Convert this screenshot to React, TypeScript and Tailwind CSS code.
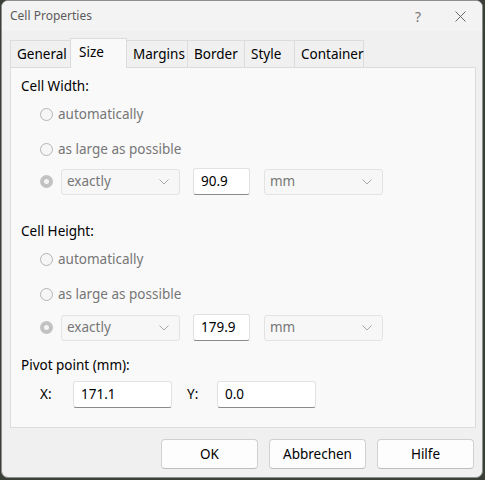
import React from "react";

const FONT = "font-['Noto_Sans','Open_Sans',sans-serif]";

function Radio() {
  return <span className="h-[13px] w-[13px] shrink-0 rounded-full border border-[#b4b4b4] bg-[#f6f6f6]" />;
}

function CheckedRadio() {
  return (
    <span className="flex h-[13px] w-[13px] shrink-0 items-center justify-center rounded-full bg-[#c2c2c2]">
      <span className="h-[5px] w-[5px] rounded-full bg-[#f4f4f4]" />
    </span>
  );
}

function Chevron() {
  return (
    <svg width="10" height="6" viewBox="0 0 10 6" className="shrink-0">
      <path d="M0.5 0.5 L5 5 L9.5 0.5" fill="none" stroke="#a8a8a8" strokeWidth="1" />
    </svg>
  );
}

function Combo({ value }: { value: string }) {
  return (
    <div className="flex h-[26px] w-[119px] items-center justify-between rounded-[3px] border border-[#e3e3e3] bg-[#f7f7f7] pl-[5px] pr-[10px] text-[#767676]">
      <span>{value}</span>
      <Chevron />
    </div>
  );
}

function Field({ value, width }: { value: string; width: string }) {
  return (
    <div className={`flex h-[27px] items-center rounded-[3px] border border-[#e2e2e2] border-b-[#8a8a8a] bg-white pl-[7px] text-black ${width}`}>
      {value}
    </div>
  );
}

function RadioOption({ label, className }: { label: string; className: string }) {
  return (
    <div className={`flex h-[20px] items-center gap-[5px] pl-[29px] text-[#767676] ${className}`}>
      <Radio />
      <span>{label}</span>
    </div>
  );
}

function SizeBlock({ title, value, first }: { title: string; value: string; first?: boolean }) {
  return (
    <>
      <div className={`flex h-[20px] items-center pl-[10px] text-black ${first ? "mt-[8px]" : "mt-[26px]"}`}>{title}</div>
      <RadioOption label="automatically" className="mt-[8px]" />
      <RadioOption label="as large as possible" className="mt-[15px]" />
      <div className={`flex h-[27px] items-center pl-[29px] ${first ? "mt-[9px]" : "mt-[10px]"}`}>
        <CheckedRadio />
        <div className="ml-[8px]">
          <Combo value="exactly" />
        </div>
        <div className="ml-[13px]">
          <Field value={value} width="w-[57px]" />
        </div>
        <div className="ml-[14px]">
          <Combo value="mm" />
        </div>
      </div>
    </>
  );
}

const tabs = [
  { label: "General", w: "w-[61px]" },
  { label: "Size", w: "w-[57px]", active: true },
  { label: "Margins", w: "w-[62px]" },
  { label: "Border", w: "w-[58px]" },
  { label: "Style", w: "w-[51px]" },
  { label: "Container", w: "w-[70px]" },
];

export default function App() {
  return (
    <div className={`h-[480px] w-[485px] bg-[#3a3f38] ${FONT} text-[13.5px]`}>
      <div className="ml-[1px] flex h-[478px] w-[482px] flex-col overflow-hidden rounded-[7px] border border-[#8e8e8e] bg-[#f0f0f0]">
        {/* title bar */}
        <div className="flex h-[30px] shrink-0 items-center bg-[#f3f3f3] pl-[8px] text-[12px] text-[#5c5c5c]">
          <span>Cell Properties</span>
          <span className="ml-auto mr-[34px] text-[14px] text-[#777]">?</span>
          <svg width="11" height="11" viewBox="0 0 11 11" className="mr-[16px]">
            <path d="M0.5 0.5 L10.5 10.5 M10.5 0.5 L0.5 10.5" stroke="#6a6a6a" strokeWidth="1" />
          </svg>
        </div>

        {/* tab strip */}
        <div className="mt-[7px] flex h-[29px] items-end pl-[8px]">
          {tabs.map((t) =>
            t.active ? (
              <div
                key={t.label}
                className={`relative z-10 -mb-px -ml-px flex h-[30px] items-start border border-b-0 border-[#dcdcdc] bg-[#f9f9f9] pl-[8px] pt-[3px] text-black ${t.w}`}
              >
                {t.label}
              </div>
            ) : (
              <div
                key={t.label}
                className={`-ml-px flex h-[27px] items-center border border-b-0 border-[#dcdcdc] bg-[#f0f0f0] pl-[6px] text-black first:ml-0 ${t.w}`}
              >
                {t.label}
              </div>
            )
          )}
        </div>

        {/* tab panel */}
        <div className="ml-[8px] flex h-[361px] w-[466px] flex-col border border-[#dcdcdc] bg-[#f9f9f9]">
          <SizeBlock title="Cell Width:" value="90.9" first />
          <SizeBlock title="Cell Height:" value="179.9" />

          <div className="mt-[14px] flex h-[20px] items-center pl-[10px] text-black">Pivot point (mm):</div>
          <div className="mt-[6px] flex h-[27px] items-center pl-[29px] text-black">
            <span className="w-[33px]">X:</span>
            <Field value="171.1" width="w-[99px]" />
            <span className="ml-[15px] w-[30px]">Y:</span>
            <Field value="0.0" width="w-[99px]" />
          </div>
        </div>

        {/* buttons */}
        <div className="mt-[11px] flex gap-[11px] pl-[159px]">
          {["OK", "Abbrechen", "Hilfe"].map((b) => (
            <button
              key={b}
              className="flex h-[30px] w-[97px] items-center justify-center rounded-[4px] border border-[#d0d0d0] border-b-[#bdbdbd] bg-[#fdfdfd] text-black"
            >
              {b}
            </button>
          ))}
        </div>
      </div>
    </div>
  );
}
